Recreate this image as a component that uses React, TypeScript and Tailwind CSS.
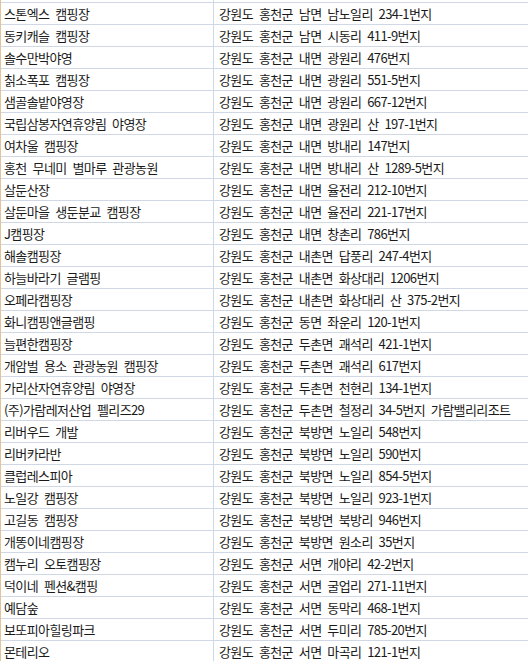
const rows: [string, string][] = [
  ['스톤엑스 캠핑장', '강원도 홍천군 남면 남노일리 234-1번지'],
  ['동키캐슬 캠핑장', '강원도 홍천군 남면 시동리 411-9번지'],
  ['솔수만박야영', '강원도 홍천군 내면 광원리 476번지'],
  ['칡소폭포 캠핑장', '강원도 홍천군 내면 광원리 551-5번지'],
  ['샘골솔밭야영장', '강원도 홍천군 내면 광원리 667-12번지'],
  ['국립삼봉자연휴양림 야영장', '강원도 홍천군 내면 광원리 산 197-1번지'],
  ['여차울 캠핑장', '강원도 홍천군 내면 방내리 147번지'],
  ['홍천 무네미 별마루 관광농원', '강원도 홍천군 내면 방내리 산 1289-5번지'],
  ['살둔산장', '강원도 홍천군 내면 율전리 212-10번지'],
  ['살둔마을 생둔분교 캠핑장', '강원도 홍천군 내면 율전리 221-17번지'],
  ['J캠핑장', '강원도 홍천군 내면 창촌리 786번지'],
  ['해솔캠핑장', '강원도 홍천군 내촌면 답풍리 247-4번지'],
  ['하늘바라기 글램핑', '강원도 홍천군 내촌면 화상대리 1206번지'],
  ['오페라캠핑장', '강원도 홍천군 내촌면 화상대리 산 375-2번지'],
  ['화니캠핑앤글램핑', '강원도 홍천군 동면 좌운리 120-1번지'],
  ['늘편한캠핑장', '강원도 홍천군 두촌면 괘석리 421-1번지'],
  ['개암벌 용소 관광농원 캠핑장', '강원도 홍천군 두촌면 괘석리 617번지'],
  ['가리산자연휴양림 야영장', '강원도 홍천군 두촌면 천현리 134-1번지'],
  ['(주)가람레저산업 펠리즈29', '강원도 홍천군 두촌면 철정리 34-5번지 가람밸리리조트'],
  ['리버우드 개발', '강원도 홍천군 북방면 노일리 548번지'],
  ['리버카라반', '강원도 홍천군 북방면 노일리 590번지'],
  ['클럽레스피아', '강원도 홍천군 북방면 노일리 854-5번지'],
  ['노일강 캠핑장', '강원도 홍천군 북방면 노일리 923-1번지'],
  ['고길동 캠핑장', '강원도 홍천군 북방면 북방리 946번지'],
  ['개똥이네캠핑장', '강원도 홍천군 북방면 원소리 35번지'],
  ['캠누리 오토캠핑장', '강원도 홍천군 서면 개야리 42-2번지'],
  ['덕이네 펜션&캠핑', '강원도 홍천군 서면 굴업리 271-11번지'],
  ['예담숲', '강원도 홍천군 서면 동막리 468-1번지'],
  ['보또피아힐링파크', '강원도 홍천군 서면 두미리 785-20번지'],
  ['몬테리오', '강원도 홍천군 서면 마곡리 121-1번지'],
]

export default function App() {
  return (
    <div
      className="h-[661px] w-[528px] overflow-hidden border-l border-[#e2c49c] bg-white text-[13px] tracking-[-0.6px] [word-spacing:3.5px] text-[#1a1a1a]"
      style={{ fontFamily: '"Malgun Gothic", "Noto Sans CJK KR", sans-serif' }}
    >
      <div className="grid h-[2px] grid-cols-[213px_1fr]">
        <div className="border-r border-[#d0d7e5]" />
        <div />
      </div>
      {rows.map(([name, addr]) => (
        <div key={name} className="grid h-[22px] grid-cols-[213px_1fr] border-t border-[#d0d7e5]">
          <div className="flex items-center overflow-hidden whitespace-nowrap border-r border-[#d0d7e5] pl-[3px] pt-[1px]">
            {name}
          </div>
          <div className="flex items-center overflow-hidden whitespace-nowrap pl-[5px] pt-[1px]">{addr}</div>
        </div>
      ))}
    </div>
  )
}
